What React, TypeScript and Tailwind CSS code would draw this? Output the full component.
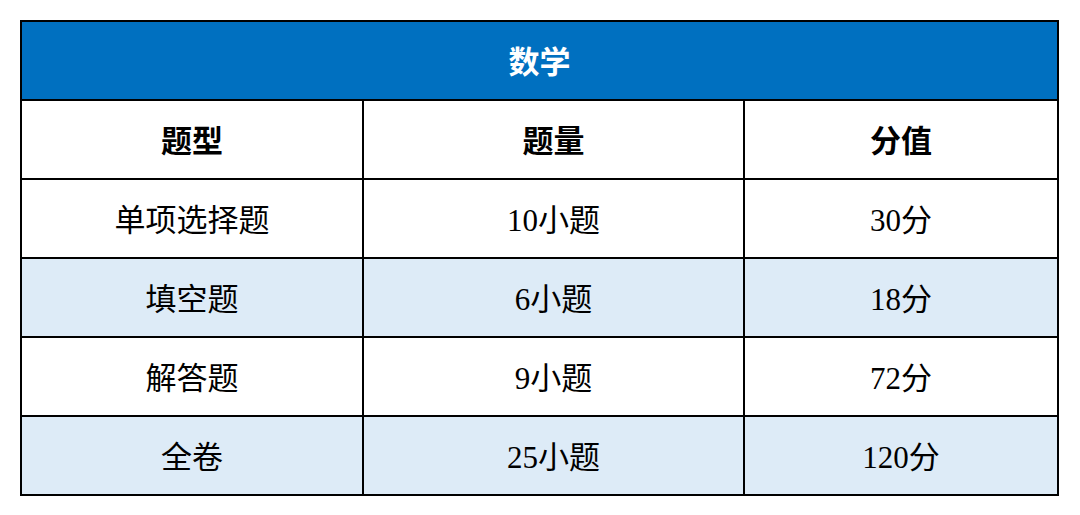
const rows = [
  { type: '单项选择题', count: '10小题', score: '30分' },
  { type: '填空题', count: '6小题', score: '18分' },
  { type: '解答题', count: '9小题', score: '72分' },
  { type: '全卷', count: '25小题', score: '120分' },
]

const cell = 'border-2 border-black h-[79px] p-0 pt-[6px] text-center align-middle'

export default function App() {
  return (
    <div className="bg-white w-[1080px] h-[515px] pt-[20px] pl-[20px]">
      <table
        className="border-collapse w-[1039px] table-fixed text-[31px] text-black"
        style={{ fontFamily: '"Liberation Serif", "Noto Sans CJK SC", serif' }}
      >
        <colgroup>
          <col className="w-[342px]" />
          <col className="w-[381px]" />
          <col />
        </colgroup>
        <tbody>
          <tr>
            <td colSpan={3} className={`${cell} bg-[#0070c0] text-white font-semibold`}>
              数学
            </td>
          </tr>
          <tr className="font-semibold">
            <td className={cell}>题型</td>
            <td className={cell}>题量</td>
            <td className={cell}>分值</td>
          </tr>
          {rows.map((r, i) => (
            <tr key={r.type} className={i % 2 === 1 ? 'bg-[#ddebf7]' : 'bg-white'}>
              <td className={cell}>{r.type}</td>
              <td className={cell}>{r.count}</td>
              <td className={cell}>{r.score}</td>
            </tr>
          ))}
        </tbody>
      </table>
    </div>
  )
}
